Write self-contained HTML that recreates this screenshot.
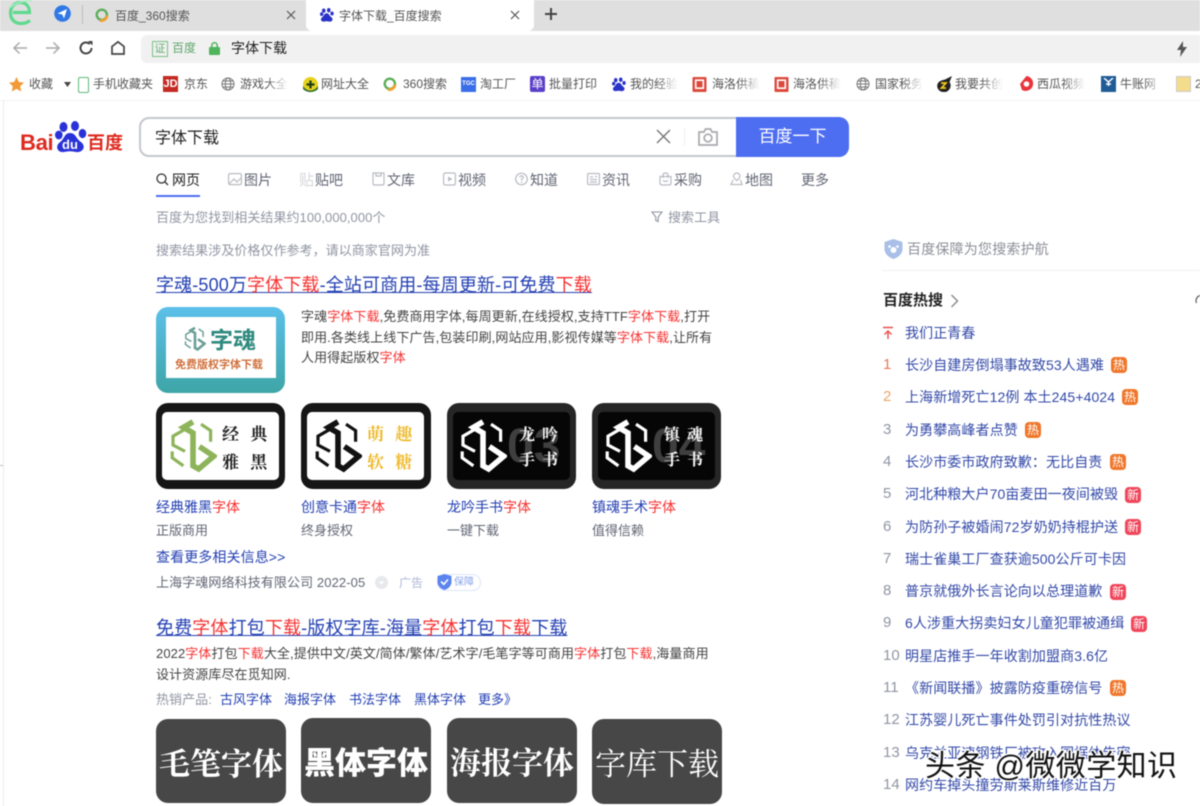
<!DOCTYPE html>
<html lang="zh-CN"><head><meta charset="utf-8"><title>字体下载_百度搜索</title>
<style>
html,body{margin:0;padding:0;background:#fff}
#p{position:relative;width:1200px;height:806px;overflow:hidden;background:#fff;font-family:"Liberation Sans","Noto Sans CJK SC",sans-serif;color:#333;filter:blur(.4px)}
#p div,#p svg,#p span.t{position:absolute}
.t{position:absolute;white-space:nowrap;line-height:20px;height:20px;transform:translateY(1px)}
.r{color:#f73131}
.b{color:#2440b3}
.bm{font-size:12px;color:#555;transform:none}
.f{-webkit-mask-image:linear-gradient(90deg,#000 55%,transparent 100%);mask-image:linear-gradient(90deg,#000 55%,transparent 100%);overflow:hidden}
.nav{font-size:14px;color:#626675}
.ic{fill:none;stroke:#b9bbc2;stroke-width:1.2}
.g{font-size:13px;color:#9195a3;letter-spacing:.05px}
.s{font-size:13px;color:#444;letter-spacing:.09px}
.tl{font-size:18px;color:#2440b3;text-decoration:underline;letter-spacing:.14px}
.n{font-size:15px;color:#9195a3}
.h{font-size:14px;color:#3349a8;letter-spacing:.1px}
.bd{width:16px;height:16px;border-radius:4px;font-size:12px;line-height:16px;text-align:center;color:#fff;background:#f0762a}
.nw{background:#f0455a}
.thumb{border-radius:12px;overflow:hidden;background:#161616;width:129px;height:86px;top:403px}
.thumb.dt{background:#262626}
.in{left:6px;top:9px;width:117px;height:68px;background:#fff;border-radius:5px}
.dk{background:#060606}
.v{font-family:"Noto Serif CJK SC","Liberation Serif",serif;font-weight:700;font-size:17px;line-height:24px;white-space:nowrap;word-spacing:7px}
.tile{background:#474747;border-radius:12px;width:130px;height:85px;top:718px;overflow:hidden;color:#fff;text-align:center;font-size:31px;line-height:85px;font-family:"Noto Serif CJK SC",serif;font-weight:700;white-space:nowrap}
</style></head><body><div id="p">

<svg width="0" height="0" style="left:0;top:0"><defs>
<symbol id="mk" viewBox="0 0 60 64">
<path d="M30 3 L18 10 L30 17 V58 L37 62 L56 46 L38 34" fill="none" stroke="currentColor" stroke-width="7"/>
<path d="M24 10 L5 21 V32 L20 40 M4 40 V48 L18 58 M40 6 L52 14 V28" fill="none" stroke="currentColor" stroke-width="4"/>
</symbol>
<symbol id="paw" viewBox="0 0 32 32">
<ellipse cx="8.500" cy="6" rx="4" ry="5" fill="currentColor"/><ellipse cx="20" cy="5" rx="4" ry="5" fill="currentColor"/><ellipse cx="3.800" cy="14" rx="3.800" ry="4.400" fill="currentColor"/><ellipse cx="27.500" cy="12.500" rx="3.800" ry="4.600" fill="currentColor"/>
<path d="M15 12 C21 12 21 18 26 21 C32 26 27 32 21 31 C17 30 13 30 9 31 C3 32 0 26 4 22 C10 18 9 12 15 12Z" fill="currentColor"/>
</symbol>
<symbol id="o360" viewBox="0 0 14 14">
<circle cx="6.800" cy="6.800" r="5.100" fill="none" stroke="#5cae5a" stroke-width="2.400"/>
<path d="M5 12.300 A5.300 5.300 0 0 0 12 7.500" fill="none" stroke="#f3a02f" stroke-width="2.800"/>
</symbol>
<symbol id="glb" viewBox="0 0 14 14">
<g fill="none" stroke="#777" stroke-width="1"><circle cx="7" cy="7" r="6"/><ellipse cx="7" cy="7" rx="2.700" ry="6"/><path d="M1 7H13M2 4H12M2 10H12"/></g>
</symbol>
<symbol id="rd" viewBox="0 0 14 15">
<rect width="14" height="15" rx="1" fill="#dc4a3e"/><rect x="3.200" y="3.200" width="7.600" height="8" fill="none" stroke="#fff" stroke-width="1.600"/>
</symbol>
</defs></svg>

<!-- tab strip -->
<div style="left:0;top:0;width:1200px;height:31px;background:#dfdfdf"></div>
<div style="left:306px;top:0;width:228px;height:31px;background:#fff;border-radius:0 0 6px 6px"></div>
<svg style="left:8px;top:0" width="26" height="26" viewBox="0 0 26 26"><path d="M5 12.500H21.500C21.500 6 17.500 2.500 12.500 2.500 6.500 2.500 2.500 7 2.500 13 2.500 19.500 7 23.500 13 23.500 16.500 23.500 19.500 22.500 22 20.500" fill="none" stroke="#5fd98e" stroke-width="3.200"/><path d="M1 8C9 2 18 0 24 1" fill="none" stroke="#a7ecc0" stroke-width="1.500"/></svg>
<svg style="left:54px;top:5px" width="17" height="17" viewBox="0 0 17 17"><circle cx="8.500" cy="8.500" r="8.300" fill="#2f78e6"/><path d="M3.500 8.500L13 4 10 13.500 8.300 9.500Z" fill="#fff"/></svg>
<div style="left:82px;top:5px;width:1px;height:19px;background:#bdbdbd"></div>
<svg style="left:95px;top:8px" width="14" height="14"><use href="#o360"/></svg>
<span class="t" style="left:115px;top:5px;font-size:12px;color:#555">百度_360搜索</span>
<svg style="left:286px;top:10px" width="10" height="10" viewBox="0 0 10 10"><path d="M1 1L9 9M9 1L1 9" stroke="#555" stroke-width="1.200"/></svg>
<svg style="left:320px;top:8px;color:#2932c8" width="14" height="14"><use href="#paw"/></svg>
<span class="t" style="left:339px;top:5px;font-size:12px;color:#555">字体下载_百度搜索</span>
<svg style="left:510px;top:10px" width="10" height="10" viewBox="0 0 10 10"><path d="M1 1L9 9M9 1L1 9" stroke="#555" stroke-width="1.200"/></svg>
<svg style="left:544px;top:7px" width="14" height="14" viewBox="0 0 14 14"><path d="M7 1V13M1 7H13" stroke="#444" stroke-width="2"/></svg>

<!-- toolbar -->
<svg style="left:12px;top:41px" width="16" height="14" viewBox="0 0 16 14"><path d="M15 7H2M7.500 1.500L2 7 7.500 12.500" fill="none" stroke="#aaa" stroke-width="1.500"/></svg>
<svg style="left:45px;top:41px" width="16" height="14" viewBox="0 0 16 14"><path d="M1 7H14M8.500 1.500L14 7 8.500 12.500" fill="none" stroke="#aaa" stroke-width="1.500"/></svg>
<svg style="left:78px;top:40px" width="16" height="16" viewBox="0 0 16 16"><path d="M13.500 8A5.500 5.500 0 1 1 11.800 4" fill="none" stroke="#444" stroke-width="2"/><path d="M10 1H14.500V5.500" fill="#444"/></svg>
<svg style="left:110px;top:40px" width="16" height="16" viewBox="0 0 16 16"><path d="M2 6.500L8 1.800 14 6.500V14H2Z" fill="none" stroke="#444" stroke-width="1.700"/></svg>
<div style="left:141px;top:35px;width:1059px;height:28px;background:#f1f1f1;border-radius:6px 0 0 6px"></div>
<div style="left:152px;top:41px;width:14px;height:14px;border:1px solid #79bf86;font-size:11px;line-height:14px;text-align:center;color:#62ad70">证</div>
<span class="t" style="left:172px;top:37px;font-size:12px;color:#5fa86c">百度</span>
<svg style="left:209px;top:42px" width="11" height="13" viewBox="0 0 11 13"><rect y="5" width="11" height="8" rx="1" fill="#4fb45c"/><path d="M2.800 6V3.500a2.700 2.700 0 0 1 5.400 0V6" fill="none" stroke="#4fb45c" stroke-width="1.500"/></svg>
<span class="t" style="left:231px;top:37px;font-size:14px;color:#222">字体下载</span>
<svg style="left:1176px;top:41px" width="12" height="16" viewBox="0 0 12 16"><path d="M7 0L1 9H5L4 16 11 6H7Z" fill="#555"/></svg>

<!-- bookmarks -->
<svg style="left:9px;top:77px" width="15" height="15" viewBox="0 0 15 15"><path d="M7.500 0L9.800 5 15 5.600 11.200 9.200 12.200 14.500 7.500 11.900 2.800 14.500 3.800 9.200 0 5.600 5.200 5Z" fill="#f29a38"/></svg>
<span class="t bm" style="left:29px;top:74px">收藏</span>
<svg style="left:64px;top:82px" width="7" height="5"><path d="M0 0H7L3.500 5Z" fill="#444"/></svg>
<div style="left:78px;top:77px;width:9px;height:14px;border:1.500px solid #5cb87a;border-radius:2px"></div>
<span class="t bm" style="left:93px;top:74px">手机收藏夹</span>
<div style="left:163px;top:76px;width:15px;height:16px;background:#c22a22;color:#fff;font:bold 11px/16px 'Liberation Sans';text-align:center">JD</div>
<span class="t bm" style="left:184px;top:74px">京东</span>
<svg style="left:221px;top:77px" width="14" height="14"><use href="#glb"/></svg>
<span class="t bm f" style="left:240px;top:74px;width:48px">游戏大全</span>
<svg style="left:303px;top:77px" width="15" height="15" viewBox="0 0 15 15"><circle cx="7.500" cy="7.500" r="7.500" fill="#e6d21c"/><path d="M0 9C4 15 11 15 15 9V12C11 16 4 16 0 12Z" fill="#2d6b2a"/><path d="M7.500 3.500V11.500M3.500 7.500H11.500" stroke="#1c3d18" stroke-width="2.200"/></svg>
<span class="t bm" style="left:321px;top:74px">网址大全</span>
<svg style="left:383px;top:77px" width="14" height="14"><use href="#o360"/></svg>
<span class="t bm" style="left:403px;top:74px">360搜索</span>
<div style="left:461px;top:77px;width:15px;height:15px;background:#3a6ee8;color:#fff;font:bold 6px/15px 'Liberation Sans';text-align:center">TGC</div>
<span class="t bm" style="left:480px;top:74px">淘工厂</span>
<div style="left:530px;top:76px;width:15px;height:16px;background:#5a3fc8;border-radius:2px;color:#fff;font-size:12px;line-height:16px;text-align:center">单</div>
<span class="t bm" style="left:549px;top:74px">批量打印</span>
<svg style="left:612px;top:77px;color:#2932c8" width="14" height="15"><use href="#paw"/></svg>
<span class="t bm f" style="left:630px;top:74px;width:48px">我的经验</span>
<svg style="left:692px;top:77px" width="15" height="15"><use href="#rd"/></svg>
<span class="t bm f" style="left:712px;top:74px;width:48px">海洛供稿</span>
<svg style="left:774px;top:77px" width="15" height="15"><use href="#rd"/></svg>
<span class="t bm f" style="left:793px;top:74px;width:48px">海洛供稿</span>
<svg style="left:856px;top:77px" width="14" height="14"><use href="#glb"/></svg>
<span class="t bm f" style="left:875px;top:74px;width:48px">国家税务</span>
<svg style="left:937px;top:76px" width="16" height="16" viewBox="0 0 16 16"><path d="M6 16A6 6 0 0 1 1 7C3 4 8 4 9 3L15 0 12.500 6A6.500 6.500 0 0 1 6 16Z" fill="#222"/><path d="M4 7H9L4.500 12H9" fill="none" stroke="#f2c81c" stroke-width="1.700"/></svg>
<span class="t bm f" style="left:955px;top:74px;width:48px">我要共创</span>
<svg style="left:1019px;top:76px" width="15" height="16" viewBox="0 0 15 16"><path d="M7.500 0A7.500 7.500 0 1 1 3 14L1 8Z" fill="#e8343a"/><circle cx="7.500" cy="8" r="2.800" fill="#fff"/></svg>
<span class="t bm f" style="left:1037px;top:74px;width:48px">西瓜视频</span>
<div style="left:1101px;top:76px;width:15px;height:16px;background:#1f5c96"></div>
<svg style="left:1103px;top:78px" width="11" height="8" viewBox="0 0 11 8"><path d="M1 0L5.500 4 10 0M5.500 4V8M3 6H8" fill="none" stroke="#fff" stroke-width="1.500"/></svg>
<span class="t bm f" style="left:1120px;top:74px;width:42px">牛账网</span>
<div style="left:1176px;top:76px;width:15px;height:16px;background:#f3dc8c;border:1px solid #ccc;box-sizing:border-box"></div>
<span class="t bm" style="left:1195px;top:74px">2</span>

<!-- page -->
<div style="left:0;top:100px;width:1200px;height:1px;background:#f4f4f4"></div>
<div style="left:3px;top:100px;width:1px;height:706px;background:#ececec"></div>
<div style="left:0;top:465px;width:3px;height:1px;background:#bbb"></div>

<!-- logo -->
<span class="t" style="left:20px;top:131px;font:700 22px/22px 'Liberation Sans';color:#de2a1e;height:22px;letter-spacing:-.3px">Bai</span>
<svg style="left:55px;top:120px;color:#2932d8" width="32" height="34"><use href="#paw"/></svg>
<span class="t" style="left:62px;top:136px;font:700 13px/15px 'Liberation Sans';color:#fff;height:15px">du</span>
<span class="t" style="left:87px;top:129px;font:700 18px/24px 'Noto Sans CJK SC',sans-serif;color:#de2a1e;height:24px">百度</span>

<!-- search -->
<div style="left:139px;top:117px;width:600px;height:36px;border:2px solid #c4c7ce;border-radius:10px 0 0 10px"></div>
<span class="t" style="left:155px;top:128px;font-size:16px;color:#222">字体下载</span>
<svg style="left:656px;top:129px" width="15" height="15" viewBox="0 0 15 15"><path d="M1 1L14 14M14 1L1 14" stroke="#777" stroke-width="1.400"/></svg>
<div style="left:684px;top:128px;width:1px;height:18px;background:#f0f0f0"></div>
<svg style="left:697px;top:127px" width="22" height="20" viewBox="0 0 22 20"><path d="M2 5H7L8.500 2H13.500L15 5H20V18H2Z" fill="none" stroke="#a8a8ae" stroke-width="1.700" stroke-linejoin="round"/><circle cx="11" cy="11" r="3.800" fill="none" stroke="#a8a8ae" stroke-width="1.700"/></svg>
<div style="left:736px;top:117px;width:113px;height:40px;background:#4e6ef2;border-radius:0 10px 10px 0;color:#fff;font-size:17px;line-height:40px;text-align:center">百度一下</div>

<!-- nav -->
<svg style="left:156px;top:173px" width="13" height="13" viewBox="0 0 13 13"><circle cx="5.500" cy="5.500" r="4.500" fill="none" stroke="#333" stroke-width="1.300"/><path d="M9 9L12 12" stroke="#333" stroke-width="1.300"/></svg>
<span class="t" style="left:172px;top:169px;font-size:14px;color:#222">网页</span>
<div style="left:156px;top:195px;width:44px;height:2px;background:#4e6ef2"></div>
<svg style="left:228px;top:172px" width="14" height="14" viewBox="0 0 14 14"><rect class="ic" x=".6" y="1.600" width="12.800" height="11" rx="1.500"/><path d="M1 12L6 7 9 10 13 6" class="ic"/></svg>
<span class="t nav" style="left:244px;top:169px">图片</span>
<span class="t" style="left:299px;top:170px;line-height:20px;color:#d6d7db;font-size:15px">贴</span>
<span class="t nav" style="left:315px;top:169px">贴吧</span>
<svg style="left:372px;top:172px" width="13" height="14" viewBox="0 0 13 14"><path class="ic" d="M1 1H12V11.500Q12 13 10.500 13H2.500Q1 13 1 11.500ZM4 1V4H9V1"/></svg>
<span class="t nav" style="left:387px;top:169px">文库</span>
<svg style="left:443px;top:172px" width="13" height="14" viewBox="0 0 13 14"><rect class="ic" x=".6" y="1" width="11.800" height="12" rx="1.500"/><path d="M5 4.500L9.500 7 5 9.500Z" fill="#b9bbc2"/></svg>
<span class="t nav" style="left:458px;top:169px">视频</span>
<svg style="left:515px;top:172px" width="13" height="14" viewBox="0 0 13 14"><circle class="ic" cx="6.500" cy="7" r="5.800"/><path class="ic" d="M4.800 5.500Q5 3.800 6.600 3.800 8.300 3.900 8.300 5.300 8.300 6.300 6.600 7.200V8.500M6.600 9.500V11"/></svg>
<span class="t nav" style="left:530px;top:169px">知道</span>
<svg style="left:587px;top:172px" width="13" height="14" viewBox="0 0 13 14"><rect class="ic" x=".6" y="1.500" width="11.800" height="11" rx="1"/><path class="ic" d="M3 5H6M3 7.500H10M3 10H10M8 4.500H10"/></svg>
<span class="t nav" style="left:602px;top:169px">资讯</span>
<svg style="left:659px;top:172px" width="13" height="14" viewBox="0 0 13 14"><path class="ic" d="M1 4.500H12V11Q12 13 10 13H3Q1 13 1 11ZM4 6V3Q4 1 6.500 1 9 1 9 3V6M4 8.500Q6.500 10.500 9 8.500"/></svg>
<span class="t nav" style="left:674px;top:169px">采购</span>
<svg style="left:730px;top:172px" width="13" height="14" viewBox="0 0 13 14"><path class="ic" d="M6.800 1A3.200 3.200 0 0 1 10 4.200C10 6 8 7.500 6.800 8.500 5.500 7.500 3.600 6 3.600 4.200A3.200 3.200 0 0 1 6.800 1ZM3 8L1 12.500H12L10.500 8"/></svg>
<span class="t nav" style="left:745px;top:169px">地图</span>
<span class="t nav" style="left:801px;top:169px">更多</span>

<span class="t g" style="left:156px;top:207px">百度为您找到相关结果约100,000,000个</span>
<svg style="left:651px;top:211px" width="12" height="12" viewBox="0 0 12 12"><path d="M1 1H11L7.200 6V10.500L4.800 9.500V6Z" fill="none" stroke="#9195a3" stroke-width="1.100"/></svg>
<span class="t g" style="left:668px;top:207px">搜索工具</span>
<span class="t g" style="left:156px;top:240px">搜索结果涉及价格仅作参考&#xFF0C;请以商家官网为准</span>

<!-- result 1 -->
<span class="t tl" style="left:156px;top:274px">字魂-500万<span class="r">字体下载</span>-全站可商用-每周更新-可免费<span class="r">下载</span></span>
<div style="left:156px;top:307px;width:129px;height:86px;border-radius:12px;background:linear-gradient(180deg,#5cc0ea,#3ea5a7)"></div>
<div style="left:166px;top:317px;width:110px;height:61px;background:#fff"></div>
<svg style="left:184px;top:326px;color:#6a9e98" width="22" height="25"><use href="#mk"/></svg>
<span class="t" style="left:210px;top:324px;font:700 23px/27px 'Noto Sans CJK SC',sans-serif;color:#2f8a7f;height:27px">字魂</span>
<span class="t" style="left:175px;top:354px;font:700 11px/18px 'Noto Sans CJK SC',sans-serif;color:#d0703c;height:18px">免费版权字体下载</span>

<span class="t s" style="left:301px;top:306px">字魂<span class="r">字体下载</span>,免费商用字体,每周更新,在线授权,支持TTF<span class="r">字体下载</span>,打开</span>
<span class="t s" style="left:301px;top:327px">即用.各类线上线下广告,包装印刷,网站应用,影视传媒等<span class="r">字体下载</span>,让所有</span>
<span class="t s" style="left:301px;top:347px">人用得起版权<span class="r">字体</span></span>

<div class="thumb" style="left:156px"><div class="in">
<svg style="left:7px;top:4px;color:#8db45a" width="48" height="58"><use href="#mk"/></svg>
<div class="v" style="left:60px;top:9px;color:#222">经 典</div><div class="v" style="left:60px;top:37px;color:#222">雅 黑</div>
</div></div>
<div class="thumb" style="left:301px;width:130px"><div class="in">
<svg style="left:7px;top:4px;color:#111" width="48" height="58"><use href="#mk"/></svg>
<div class="v" style="left:60px;top:9px;color:#eeb92c">萌 趣</div><div class="v" style="left:60px;top:37px;color:#eeb92c">软 糖</div>
</div></div>
<div class="thumb dt" style="left:447px"><div class="in dk">
<div style="left:54px;top:10px;font:700 48px/50px 'Liberation Sans';color:#3f3f3f;white-space:nowrap">03</div>
<svg style="left:6px;top:4px;color:#fff" width="48" height="58"><use href="#mk"/></svg>
<div class="v" style="left:66px;top:10px;color:#f2f2f2;font-size:16px;word-spacing:3px">龙 吟</div><div class="v" style="left:66px;top:35px;color:#f2f2f2;font-size:16px;word-spacing:3px">手 书</div>
</div></div>
<div class="thumb dt" style="left:592px"><div class="in dk">
<div style="left:54px;top:10px;font:700 48px/50px 'Liberation Sans';color:#3f3f3f;white-space:nowrap">04</div>
<svg style="left:6px;top:4px;color:#fff" width="48" height="58"><use href="#mk"/></svg>
<div class="v" style="left:66px;top:10px;color:#f2f2f2;font-size:16px;word-spacing:3px">镇 魂</div><div class="v" style="left:66px;top:35px;color:#f2f2f2;font-size:16px;word-spacing:3px">手 书</div>
</div></div>

<span class="t b" style="left:156px;top:496px;font-size:14px">经典雅黑<span class="r">字体</span></span>
<span class="t b" style="left:301px;top:496px;font-size:14px">创意卡通<span class="r">字体</span></span>
<span class="t b" style="left:447px;top:496px;font-size:14px">龙吟手书<span class="r">字体</span></span>
<span class="t b" style="left:592px;top:496px;font-size:14px">镇魂手术<span class="r">字体</span></span>
<span class="t" style="left:156px;top:520px;font-size:13px;color:#626675">正版商用</span>
<span class="t" style="left:301px;top:520px;font-size:13px;color:#626675">终身授权</span>
<span class="t" style="left:447px;top:520px;font-size:13px;color:#626675">一键下载</span>
<span class="t" style="left:592px;top:520px;font-size:13px;color:#626675">值得信赖</span>
<span class="t b" style="left:156px;top:546px;font-size:14px;letter-spacing:.1px">查看更多相关信息&gt;&gt;</span>
<span class="t" style="left:156px;top:572px;font-size:13px;color:#626675;letter-spacing:.1px">上海字魂网络科技有限公司 2022-05</span>
<svg style="left:375px;top:576px" width="13" height="13" viewBox="0 0 13 13"><circle cx="6.500" cy="6.500" r="6.500" fill="#e8e9ec"/><path d="M3.800 5.500H9.200L6.500 8.500Z" fill="#fff"/></svg>
<span class="t" style="left:399px;top:572px;font-size:12px;color:#b0b8d8">广告</span>
<div style="left:437px;top:574px;width:42px;height:15px;border:1px solid #dde5fa;border-radius:9px;box-sizing:content-box"></div>
<svg style="left:437px;top:574px" width="15" height="16" viewBox="0 0 15 16"><path d="M7.500 0L14.500 2V8C14.500 12 11 15 7.500 16 4 15 .5 12 .5 8V2Z" fill="#5b84ee"/><path d="M4 7.500L6.800 10.300 11 5.500" fill="none" stroke="#fff" stroke-width="1.600"/></svg>
<span class="t" style="left:454px;top:572px;font-size:10px;color:#8aa3ea">保障</span>

<!-- result 2 -->
<span class="t tl" style="left:156px;top:617px">免费<span class="r">字体</span>打包<span class="r">下载</span>-版权字库-海量<span class="r">字体</span>打包<span class="r">下载</span>下载</span>
<span class="t s" style="left:156px;top:643px">2022<span class="r">字体</span>打包<span class="r">下载</span>大全,提供中文/英文/简体/繁体/艺术字/毛笔字等可商用<span class="r">字体</span>打包<span class="r">下载</span>,海量商用</span>
<span class="t s" style="left:156px;top:664px">设计资源库尽在觅知网.</span>
<span class="t g" style="left:156px;top:689px">热销产品:</span>
<span class="t b" style="left:220px;top:689px;font-size:13px">古风字体</span>
<span class="t b" style="left:284px;top:689px;font-size:13px">海报字体</span>
<span class="t b" style="left:349px;top:689px;font-size:13px">书法字体</span>
<span class="t b" style="left:414px;top:689px;font-size:13px">黑体字体</span>
<span class="t b" style="left:478px;top:689px;font-size:13px">更多》</span>

<div class="tile" style="left:156px;top:719px;height:84px">毛笔字体</div>
<div class="tile" style="left:301px;font-family:'Noto Sans CJK SC',sans-serif;font-weight:900">黑体字体</div>
<div class="tile" style="left:447px">海报字体</div>
<div class="tile" style="left:592px;top:719px;font-weight:400">字库下载</div>

<!-- right column -->
<svg style="left:884px;top:239px" width="19" height="20" viewBox="0 0 19 20"><path d="M9.500 0L18.500 3V10C18.500 15 14 18.500 9.500 20 5 18.500 .5 15 .5 10V3Z" fill="#a9bfe8"/><circle cx="9.500" cy="11" r="3" fill="#fff"/><circle cx="5.500" cy="7.500" r="1.300" fill="#fff"/><circle cx="13.500" cy="7.500" r="1.300" fill="#fff"/></svg>
<span class="t" style="left:907px;top:238px;font-size:14px;color:#8d8f98;letter-spacing:.2px">百度保障为您搜索护航</span>
<div style="left:882px;top:270px;width:318px;height:1px;background:#f0f0f2"></div>
<span class="t" style="left:883px;top:290px;font-size:15px;font-weight:700;color:#222">百度热搜</span>
<svg style="left:950px;top:294px" width="9" height="14" viewBox="0 0 9 14"><path d="M1.500 1L7.500 7 1.500 13" fill="none" stroke="#888" stroke-width="1.400"/></svg>
<svg style="left:1195px;top:294px" width="5" height="14" viewBox="0 0 5 14"><path d="M5 1.500A5.500 5.500 0 0 0 1.500 9" fill="none" stroke="#666" stroke-width="1.300"/></svg>

<svg style="left:882px;top:326px" width="12" height="14" viewBox="0 0 12 14"><path d="M1 1.500H11M6 13V5M2.500 8.500L6 5 9.500 8.500" fill="none" stroke="#e5504e" stroke-width="1.400"/></svg>
<span class="t h" style="left:905px;top:322px">我们正青春</span>

<span class="t n" style="left:883px;top:354px;color:#e8785a">1</span><span class="t h" style="left:905px;top:354px">长沙自建房倒塌事故致53人遇难</span><div class="bd" style="left:1111px;top:357px">热</div>
<span class="t n" style="left:883px;top:386px;color:#e8a668">2</span><span class="t h" style="left:905px;top:386px">上海新增死亡12例 本土245+4024</span><div class="bd" style="left:1122px;top:389px">热</div>
<span class="t n" style="left:883px;top:419px">3</span><span class="t h" style="left:905px;top:419px">为勇攀高峰者点赞</span><div class="bd" style="left:1025px;top:422px">热</div>
<span class="t n" style="left:883px;top:451px">4</span><span class="t h" style="left:905px;top:451px">长沙市委市政府致歉&#xFF1A;无比自责</span><div class="bd" style="left:1110px;top:454px">热</div>
<span class="t n" style="left:883px;top:483px">5</span><span class="t h" style="left:905px;top:483px">河北种粮大户70亩麦田一夜间被毁</span><div class="bd nw" style="left:1125px;top:487px">新</div>
<span class="t n" style="left:883px;top:516px">6</span><span class="t h" style="left:905px;top:516px">为防孙子被婚闹72岁奶奶持棍护送</span><div class="bd nw" style="left:1125px;top:519px">新</div>
<span class="t n" style="left:883px;top:548px">7</span><span class="t h" style="left:905px;top:548px">瑞士雀巢工厂查获逾500公斤可卡因</span>
<span class="t n" style="left:883px;top:580px">8</span><span class="t h" style="left:905px;top:580px">普京就俄外长言论向以总理道歉</span><div class="bd nw" style="left:1110px;top:584px">新</div>
<span class="t n" style="left:883px;top:612px">9</span><span class="t h" style="left:905px;top:612px">6人涉重大拐卖妇女儿童犯罪被通缉</span><div class="bd nw" style="left:1131px;top:616px">新</div>
<span class="t n" style="left:883px;top:645px">10</span><span class="t h" style="left:905px;top:645px">明星店推手一年收割加盟商3.6亿</span>
<span class="t n" style="left:883px;top:677px">11</span><span class="t h" style="left:905px;top:677px">《新闻联播》披露防疫重磅信号</span><div class="bd" style="left:1110px;top:680px">热</div>
<span class="t n" style="left:883px;top:709px">12</span><span class="t h" style="left:905px;top:709px">江苏婴儿死亡事件处罚引对抗性热议</span>
<span class="t n" style="left:883px;top:742px">13</span><span class="t h" style="left:905px;top:742px">乌克兰亚速钢铁厂被攻入国据体告密</span>
<span class="t n" style="left:883px;top:774px">14</span><span class="t h" style="left:905px;top:774px">网约车掉头撞劳斯莱斯维修近百万</span>

<!-- watermark -->
<span class="t" style="left:925px;top:747px;height:38px;line-height:38px;font-size:30px;letter-spacing:.4px;color:#111;text-shadow:-1.500px 0 #fff,1.500px 0 #fff,0 -1.500px #fff,0 1.500px #fff,-1px -1px #fff,1px 1px #fff,-1px 1px #fff,1px -1px #fff">头条 @微微学知识</span>
</div></body></html>
